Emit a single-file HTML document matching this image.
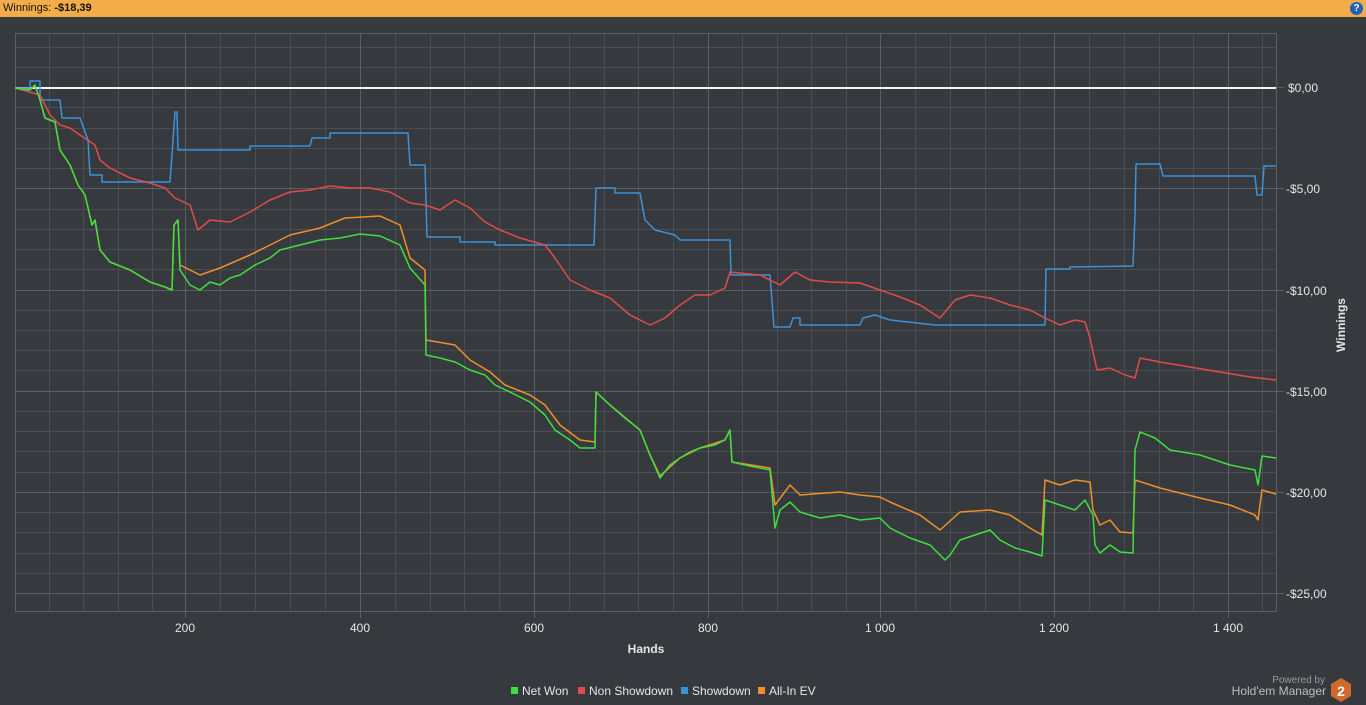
<!DOCTYPE html>
<html><head><meta charset="utf-8"><style>
body{margin:0;width:1366px;height:705px;background:#36393d;font-family:"Liberation Sans",sans-serif;overflow:hidden;position:relative}
.top{position:absolute;left:0;top:0;width:1366px;height:17px;background:#f2ad4a;font-size:11px;color:#111;line-height:17px}
.top span{padding-left:3px}
.help{position:absolute;right:3px;top:2px;width:13px;height:13px;border-radius:50%;background:#1f63b8;color:#fff;font-size:10px;font-weight:bold;text-align:center;line-height:13px}
.lbl{position:absolute;color:#e6e6e6;font-size:12px}
</style></head><body>
<div class="top"><span>Winnings: <b>-$18,39</b></span><div class="help">?</div></div>
<svg width="1366" height="705" style="position:absolute;left:0;top:0">
<g stroke="#4a4d51" stroke-width="1">
<line x1="15" y1="47.5" x2="1276" y2="47.5"/><line x1="15" y1="67.5" x2="1276" y2="67.5"/>
<line x1="15" y1="107.5" x2="1276" y2="107.5"/><line x1="15" y1="128.5" x2="1276" y2="128.5"/><line x1="15" y1="148.5" x2="1276" y2="148.5"/><line x1="15" y1="168.5" x2="1276" y2="168.5"/>
<line x1="15" y1="209.5" x2="1276" y2="209.5"/><line x1="15" y1="229.5" x2="1276" y2="229.5"/><line x1="15" y1="249.5" x2="1276" y2="249.5"/><line x1="15" y1="269.5" x2="1276" y2="269.5"/>
<line x1="15" y1="310.5" x2="1276" y2="310.5"/><line x1="15" y1="330.5" x2="1276" y2="330.5"/><line x1="15" y1="350.5" x2="1276" y2="350.5"/><line x1="15" y1="370.5" x2="1276" y2="370.5"/>
<line x1="15" y1="411.5" x2="1276" y2="411.5"/><line x1="15" y1="431.5" x2="1276" y2="431.5"/><line x1="15" y1="451.5" x2="1276" y2="451.5"/><line x1="15" y1="472.5" x2="1276" y2="472.5"/>
<line x1="15" y1="512.5" x2="1276" y2="512.5"/><line x1="15" y1="532.5" x2="1276" y2="532.5"/><line x1="15" y1="553.5" x2="1276" y2="553.5"/><line x1="15" y1="573.5" x2="1276" y2="573.5"/>
<line x1="49.5" y1="33" x2="49.5" y2="612"/><line x1="83.5" y1="33" x2="83.5" y2="612"/><line x1="118.5" y1="33" x2="118.5" y2="612"/><line x1="152.5" y1="33" x2="152.5" y2="612"/>
<line x1="220.5" y1="33" x2="220.5" y2="612"/><line x1="255.5" y1="33" x2="255.5" y2="612"/><line x1="290.5" y1="33" x2="290.5" y2="612"/><line x1="325.5" y1="33" x2="325.5" y2="612"/>
<line x1="395.5" y1="33" x2="395.5" y2="612"/><line x1="430.5" y1="33" x2="430.5" y2="612"/><line x1="464.5" y1="33" x2="464.5" y2="612"/><line x1="499.5" y1="33" x2="499.5" y2="612"/>
<line x1="569.5" y1="33" x2="569.5" y2="612"/><line x1="604.5" y1="33" x2="604.5" y2="612"/><line x1="638.5" y1="33" x2="638.5" y2="612"/><line x1="673.5" y1="33" x2="673.5" y2="612"/>
<line x1="742.5" y1="33" x2="742.5" y2="612"/><line x1="777.5" y1="33" x2="777.5" y2="612"/><line x1="811.5" y1="33" x2="811.5" y2="612"/><line x1="846.5" y1="33" x2="846.5" y2="612"/>
<line x1="915.5" y1="33" x2="915.5" y2="612"/><line x1="950.5" y1="33" x2="950.5" y2="612"/><line x1="985.5" y1="33" x2="985.5" y2="612"/><line x1="1019.5" y1="33" x2="1019.5" y2="612"/>
<line x1="1089.5" y1="33" x2="1089.5" y2="612"/><line x1="1124.5" y1="33" x2="1124.5" y2="612"/><line x1="1159.5" y1="33" x2="1159.5" y2="612"/><line x1="1193.5" y1="33" x2="1193.5" y2="612"/>
<line x1="1262.5" y1="33" x2="1262.5" y2="612"/>
</g>
<g stroke="#5c5f63" stroke-width="1">
<rect x="15.5" y="33.5" width="1261" height="578" fill="none"/>
<line x1="15" y1="188.5" x2="1284" y2="188.5"/><line x1="15" y1="290.5" x2="1284" y2="290.5"/><line x1="15" y1="391.5" x2="1284" y2="391.5"/><line x1="15" y1="492.5" x2="1284" y2="492.5"/><line x1="15" y1="593.5" x2="1284" y2="593.5"/>
<line x1="1276" y1="87.5" x2="1284" y2="87.5"/>
<line x1="185.5" y1="33" x2="185.5" y2="618"/><line x1="360.5" y1="33" x2="360.5" y2="618"/><line x1="534.5" y1="33" x2="534.5" y2="618"/><line x1="708.5" y1="33" x2="708.5" y2="618"/><line x1="880.5" y1="33" x2="880.5" y2="618"/><line x1="1054.5" y1="33" x2="1054.5" y2="618"/><line x1="1228.5" y1="33" x2="1228.5" y2="618"/>
</g>
<line x1="15" y1="88" x2="1276" y2="88" stroke="#f4f4f4" stroke-width="2"/>
<g fill="none" stroke-width="1.5" stroke-linejoin="round">
<polyline stroke="#3d93d6" points="15,88 30,88 30,81 40,81 40,100 60,100 62,118 80,118 88,140 90,175 102,175 102,182 170,182 173,140 175,112 177,112 178,150 250,150 250,146 310,146 312,138 330,138 330,133 408,133 410,165 425,165 427,237 460,237 460,242 495,242 495,245 594,245 596,188 615,188 615,193 640,193 645,220 655,230 675,235 680,240 730,240 731,275 770,275 774,327 790,327 793,318 800,318 800,325 860,325 863,318 875,315 890,320 935,325 1045,325 1046,269 1070,269 1070,267 1133,266 1135,215 1136,164 1160,164 1163,176 1255,176 1257,195 1262,195 1264,166 1276,166"/>
<polyline stroke="#e04b4b" points="15,88 40,95 50,115 60,125 70,128 80,135 95,145 100,160 110,168 130,178 150,183 165,188 175,198 190,205 198,230 210,220 230,222 250,212 270,200 290,192 310,190 330,186 350,188 370,188 390,192 410,203 425,205 440,210 455,200 470,208 485,222 500,230 520,238 545,245 555,258 570,280 590,290 610,298 630,315 650,325 665,318 680,305 695,295 710,295 725,288 730,272 760,275 780,285 795,272 810,280 830,282 860,283 880,290 900,297 920,305 940,318 955,300 970,295 990,298 1010,305 1030,310 1045,318 1060,325 1075,320 1085,322 1090,338 1097,370 1110,368 1125,375 1135,378 1140,358 1160,362 1190,367 1220,372 1250,377 1276,380"/>
<polyline stroke="#ef8f2c" points="15,88 30,90 35,85 40,100 45,118 55,122 60,150 70,165 78,185 85,195 92,225 95,220 100,250 110,262 130,270 150,282 165,287 172,290 174,225 178,220 180,265 190,270 200,275 220,268 250,255 270,245 290,235 320,228 345,218 380,216 400,225 410,258 425,270 426,340 455,345 470,360 490,372 505,385 530,395 545,405 560,425 580,440 595,442 596,392 610,405 640,430 650,455 660,476 680,458 700,448 725,440 730,430 732,462 770,468 775,505 790,485 800,495 840,492 860,495 880,497 890,502 920,515 940,530 960,512 990,510 1010,515 1030,528 1042,535 1045,480 1060,485 1075,480 1090,482 1093,510 1100,525 1110,520 1120,532 1133,533 1135,480 1160,488 1200,498 1230,505 1255,515 1258,520 1262,490 1276,494"/>
<polyline stroke="#3ee03e" points="15,88 30,90 35,85 40,100 45,118 55,122 60,150 70,165 78,185 85,195 92,225 95,220 100,250 110,262 130,270 150,282 165,287 172,290 174,225 178,220 180,270 190,285 200,290 210,282 220,285 230,278 240,275 255,265 270,258 280,250 300,245 320,240 340,238 360,234 380,236 400,245 410,268 425,285 426,355 440,358 455,362 470,370 485,375 495,385 510,392 530,402 545,415 555,430 570,440 580,448 595,448 596,392 610,405 625,418 640,430 650,455 660,478 670,465 680,458 690,452 700,448 715,445 725,440 730,430 732,462 745,465 770,470 775,528 780,510 790,502 800,512 820,518 840,515 860,520 880,518 890,528 910,538 930,545 945,560 950,555 960,540 975,535 990,530 1000,540 1015,548 1030,552 1042,556 1045,500 1060,505 1075,510 1085,500 1093,515 1095,545 1100,553 1110,545 1120,552 1133,553 1135,450 1140,432 1155,438 1170,450 1200,455 1230,465 1255,470 1258,485 1262,456 1276,458"/>
</g>
<g fill="#e6e6e6" font-size="12" font-family="Liberation Sans, sans-serif">
<text x="1288" y="92">$0,00</text><text x="1286" y="193">-$5,00</text><text x="1286" y="295">-$10,00</text><text x="1286" y="396">-$15,00</text><text x="1286" y="497">-$20,00</text><text x="1286" y="598">-$25,00</text>
<g text-anchor="middle"><text x="185" y="632">200</text><text x="360" y="632">400</text><text x="534" y="632">600</text><text x="708" y="632">800</text><text x="880" y="632">1 000</text><text x="1054" y="632">1 200</text><text x="1228" y="632">1 400</text>
<text x="646" y="653" font-weight="bold">Hands</text>
<text transform="translate(1345,325) rotate(-90)" font-weight="bold">Winnings</text></g>
</g>
<g font-size="12" fill="#e6e6e6" font-family="Liberation Sans, sans-serif">
<rect x="511" y="687" width="7" height="7" fill="#3ee03e"/><text x="522" y="695">Net Won</text>
<rect x="578" y="687" width="7" height="7" fill="#e04b4b"/><text x="589" y="695">Non Showdown</text>
<rect x="681" y="687" width="7" height="7" fill="#3d93d6"/><text x="692" y="695">Showdown</text>
<rect x="758" y="687" width="7" height="7" fill="#ef8f2c"/><text x="769" y="695">All-In EV</text>
<text x="1325" y="683" font-size="10" fill="#9a9a9a" text-anchor="end">Powered by</text>
<text x="1326" y="695" font-size="12" fill="#bdbdbd" text-anchor="end">Hold'em Manager</text>
<polygon points="1341,678 1351,684 1351,696 1341,702 1331,696 1331,684" fill="#d0692c"/>
<text x="1341" y="696" font-size="14" font-weight="bold" fill="#fff" text-anchor="middle">2</text>
</g>
</svg>
</body></html>
